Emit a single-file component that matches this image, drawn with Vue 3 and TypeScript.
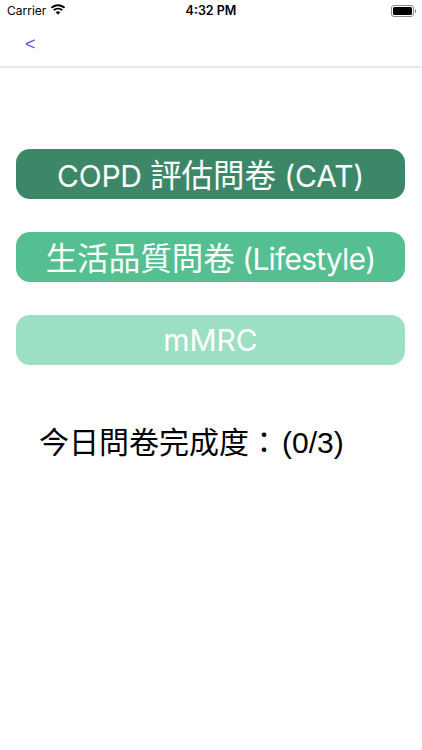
<script setup lang="ts">
const buttons = [
  { lead: 'COPD ', cjk: '評估問卷', tail: ' (CAT)', cls: 'dark' },
  { lead: '', cjk: '生活品質問卷', tail: ' (Lifestyle)', cls: 'mid' },
  { lead: 'mMRC', cjk: '', tail: '', cls: 'light' },
]
</script>

<template>
  <div class="page">
    <header class="top">
      <div class="status">
        <div class="st-left">
          <span>Carrier</span>
          <svg class="wifi" width="16" height="12" viewBox="0 0 16 12">
            <path d="M8 2.2c2.3 0 4.4.9 6 2.4l1.2-1.3C13.3 1.4 10.800.3 8 .3S2.700 1.400.8 3.300L2 4.600c1.600-1.500 3.700-2.400 6-2.400z" fill="#000"/>
            <path d="M8 5.600c1.400 0 2.600.5 3.600 1.400l1.200-1.300C11.500 4.500 9.800 3.800 8 3.800s-3.500.7-4.800 1.900L4.400 7c1-.9 2.200-1.400 3.600-1.400z" fill="#000"/>
            <path d="M8 7.300c-.9 0-1.700.3-2.300.9L8 10.800l2.300-2.600c-.6-.6-1.400-.9-2.300-.9z" fill="#000"/>
          </svg>
        </div>
        <span class="time">4:32 PM</span>
        <div class="battery"><span class="cell"><span class="fill"></span></span><span class="nub"></span></div>
      </div>
      <nav class="nav"><span class="back">&lt;</span></nav>
    </header>
    <main class="body">
      <button v-for="b in buttons" :key="b.cls" class="btn" :class="b.cls">
        <span class="latin">{{ b.lead }}</span><span class="cjk">{{ b.cjk }}</span><span class="latin">{{ b.tail }}</span>
      </button>
      <p class="progress" lang="zh-Hant">今日問卷完成度：<span class="count">(0/3)</span></p>
    </main>
  </div>
</template>

<style>
html, body { margin: 0; background: #fff; }
</style>

<style scoped>
.page {
  width: 422px;
  height: 750px;
  background: #fff;
  overflow: hidden;
  font-family: "Inter", "Liberation Sans", "Noto Sans CJK TC", sans-serif;
}
.top {
  height: 66px;
  box-shadow: 0 1px 3px rgba(0, 0, 0, 0.2);
  display: flex;
  flex-direction: column;
}
.status {
  height: 21px;
  display: grid;
  grid-template-columns: 1fr auto 1fr;
  align-items: center;
  padding: 0 7px;
  font-size: 12px;
  color: #000;
}
.st-left { display: flex; align-items: center; gap: 4px; }
.wifi { margin-top: -2px; }
.time { font-weight: 600; font-size: 12.5px; }
.battery { display: flex; align-items: center; justify-content: flex-end; gap: 1px; margin-right: -1px; }
.cell {
  width: 19px;
  height: 8px;
  border: 1px solid #8a8a8a;
  border-radius: 3px;
  padding: 1px;
  box-sizing: content-box;
  display: block;
}
.fill { display: block; width: 100%; height: 100%; background: #000; border-radius: 1.500px; }
.nub { width: 1.500px; height: 4px; background: #8a8a8a; border-radius: 0 1px 1px 0; }
.nav { flex: 1; display: flex; align-items: center; padding-left: 25px; padding-top: 2px; }
.back { color: #5a4fcf; font-size: 18px; font-family: "Liberation Sans", sans-serif; }
.body {
  display: flex;
  flex-direction: column;
  padding: 83px 17px 0 16px;
}
.btn {
  height: 50px;
  border: 0;
  border-radius: 14px;
  margin: 0 0 33px;
  padding: 0 0 2px;
  color: #fff;
  font-size: 30px;
  font-family: "Inter", "Liberation Sans", "Noto Sans CJK TC", sans-serif;
  text-align: center;
  white-space: nowrap;
}
.cjk { font-size: 31.500px; }
.mid .latin { letter-spacing: -0.800px; }
.dark .latin { letter-spacing: -0.200px; }
.dark { background: #3c8767; }
.mid { background: #55bf92; }
.light { background: #9cdfc3; }
.progress {
  margin: 22px 0 0 23px;
  font-size: 30px;
  line-height: 46px;
  color: #000;
  white-space: nowrap;
  font-family: "Liberation Sans", "Noto Sans CJK TC", sans-serif;
}
.count { margin-left: 3px; }
</style>
